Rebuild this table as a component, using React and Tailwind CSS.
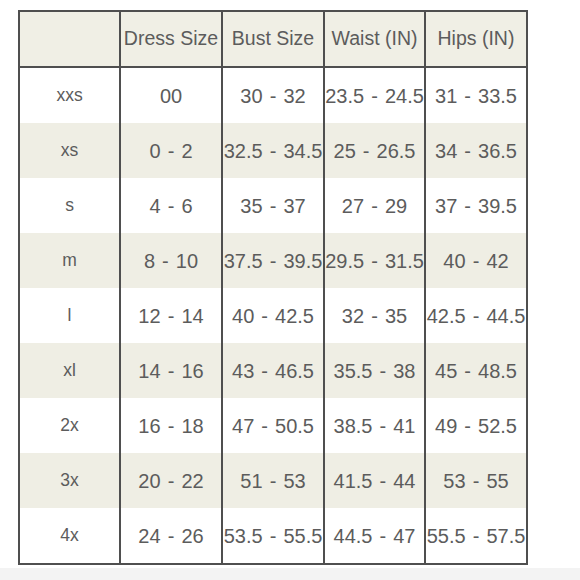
import React from 'react';

const headers = ['', 'Dress Size', 'Bust Size', 'Waist (IN)', 'Hips (IN)'];

const rows = [
  ['xxs', '00', '30 - 32', '23.5 - 24.5', '31 - 33.5'],
  ['xs', '0 - 2', '32.5 - 34.5', '25 - 26.5', '34 - 36.5'],
  ['s', '4 - 6', '35 - 37', '27 - 29', '37 - 39.5'],
  ['m', '8 - 10', '37.5 - 39.5', '29.5 - 31.5', '40 - 42'],
  ['l', '12 - 14', '40 - 42.5', '32 - 35', '42.5 - 44.5'],
  ['xl', '14 - 16', '43 - 46.5', '35.5 - 38', '45 - 48.5'],
  ['2x', '16 - 18', '47 - 50.5', '38.5 - 41', '49 - 52.5'],
  ['3x', '20 - 22', '51 - 53', '41.5 - 44', '53 - 55'],
  ['4x', '24 - 26', '53.5 - 55.5', '44.5 - 47', '55.5 - 57.5'],
];

const cols = 'grid grid-cols-[99px_102px_102px_101px_102px]';

export default function App() {
  return (
    <div className="w-[580px] h-[580px] bg-white flex flex-col font-['Liberation_Sans',Arial,sans-serif] text-[#5c5c5c]">
      <div className="pt-[10px] pl-[18px]">
        <div className="w-max border-2 border-[#4f4f4f]">
          {/* header */}
          <div className={`${cols} h-[56px] bg-[#f0efe5] border-b-2 border-[#4f4f4f]`}>
            {headers.map((h, i) => (
              <div
                key={i}
                className={`flex items-center justify-center text-[19.5px] whitespace-nowrap ${i > 0 ? 'border-l-2 border-[#4f4f4f]' : ''}`}
              >
                {h}
              </div>
            ))}
          </div>
          {rows.map((r, ri) => (
            <div key={r[0]} className={`${cols} h-[55px] ${ri % 2 === 1 ? 'bg-[#efeee4]' : 'bg-white'}`}>
              {r.map((c, i) => (
                <div
                  key={i}
                  className={`flex items-center justify-center whitespace-nowrap ${i === 0 ? 'text-[17.5px]' : 'text-[20px] [word-spacing:1.5px]'} ${i > 0 ? 'border-l-2 border-[#4f4f4f]' : ''}`}
                >
                  {c}
                </div>
              ))}
            </div>
          ))}
        </div>
      </div>
      <div className="flex-1" />
      <div className="h-[12px] bg-[#f3f3f3]" />
    </div>
  );
}
